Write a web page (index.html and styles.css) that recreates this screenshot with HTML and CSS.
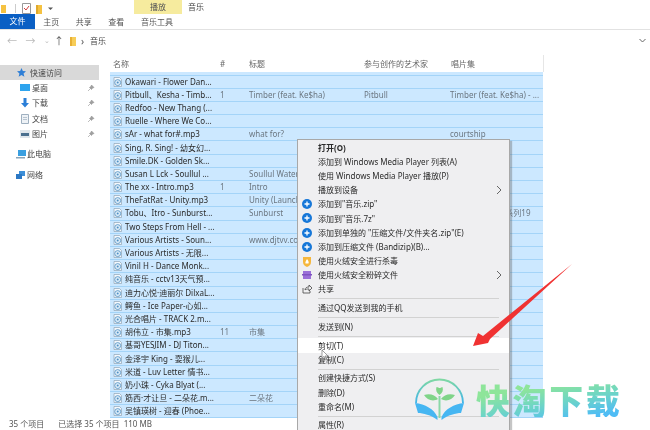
FILE: index.html
```html
<!DOCTYPE html>
<html lang="zh">
<head>
<meta charset="utf-8">
<title>音乐</title>
<link rel="stylesheet" href="styles.css">
</head>
<body>
<svg class="defs" width="0" height="0">
  <symbol id="mp3" viewBox="0 0 9 10">
    <path d="M1 .5h5.500L8.500 2.500V9.500H1z" fill="#f4f8fc" stroke="#8fa3b5" stroke-width=".7"/>
    <circle cx="4.700" cy="5.600" r="3" fill="#dcecf8" stroke="#4f90c4" stroke-width=".8"/>
    <circle cx="4.700" cy="5.600" r="1" fill="#4f90c4"/>
  </symbol>
  <symbol id="pin" viewBox="0 0 8 8">
    <path d="M4.500 1l2.500 2.500-1.500.5-1 1.500-2-2 1.500-1zM3 5L1 7" fill="#a0a0a0" stroke="#909090" stroke-width=".6"/>
  </symbol>
  <symbol id="plus" viewBox="0 0 10 10">
    <circle cx="5" cy="5" r="5" fill="#1677d8"/>
    <path d="M5 2.500v5M2.500 5h5" stroke="#fff" stroke-width="1.300"/>
  </symbol>
  <symbol id="chev" viewBox="0 0 6 10">
    <path d="M1 1l4 4-4 4" fill="none" stroke="#666" stroke-width="1"/>
  </symbol>
</svg>
<div class="window">
  <header class="title-row">
    <div class="quick">
      <svg class="q-folder-cut" width="6" height="9" viewBox="0 0 6 9"><path d="M0 1h5v8H0z" fill="#f5c242"/></svg>
      <span class="q-div"></span>
      <svg width="9" height="11" viewBox="0 0 9 11"><path d="M.5.500h8v10h-8z" fill="#fff" stroke="#999"/><path d="M2 5l2 2 3-4" fill="none" stroke="#d04040"/></svg>
      <svg width="7" height="10" viewBox="0 0 7 10"><path d="M0 1h6v9H0z" fill="#f5c242"/><path d="M0 1h2v9H0z" fill="#e0a92c"/></svg>
      <svg width="5" height="5" viewBox="0 0 5 5"><path d="M0 1.500h5L2.500 4z" fill="#555"/></svg>
    </div>
    <div class="play-tab">播放</div>
    <div class="win-title">音乐</div>
  </header>
  <nav class="tabs">
    <span class="tab file">文件</span>
    <span class="tab">主页</span>
    <span class="tab">共享</span>
    <span class="tab">查看</span>
    <span class="tab tool">音乐工具</span>
  </nav>
  <div class="address">
    <span class="nav-back">←</span>
    <span class="nav-fwd">→</span>
    <span class="nav-hist">⌄</span>
    <span class="up">↑</span>
    <svg class="crumb-folder" width="7" height="10" viewBox="0 0 7 10"><path d="M0 1h6v9H0z" fill="#f7cd58"/><path d="M0 1h2v9H0z" fill="#e8b035"/></svg>
    <span class="crumb-sep">›</span>
    <span class="crumb">音乐</span>
    <svg class="addr-drop" width="7" height="5" viewBox="0 0 7 5"><path d="M.5 1l3 3 3-3" fill="none" stroke="#666"/></svg>
  </div>
  <div class="body">
    <aside class="nav">
      <div class="nav-item active">
        <svg width="9" height="9" viewBox="0 0 10 10"><path d="M5 0l1.500 3.400 3.500.3-2.700 2.300.9 3.600L5 7.700 1.800 9.600l.9-3.600L0 3.700l3.500-.3z" fill="#2f7fd6"/></svg>
        <span>快速访问</span>
      </div>
      <div class="nav-item sub">
        <svg width="10" height="7" viewBox="0 0 10 7"><path d="M0 0h10v7H0z" fill="#2ea4ee"/></svg>
        <span class="nav-label">桌面</span>
        <svg class="pin" width="8" height="8"><use href="#pin"/></svg>
      </div>
      <div class="nav-item sub">
        <svg width="10" height="10" viewBox="0 0 10 10"><path d="M3.500 0h3v5H9L5 9.500 1 5h2.500z" fill="#2b7fd8"/></svg>
        <span class="nav-label">下载</span>
        <svg class="pin" width="8" height="8"><use href="#pin"/></svg>
      </div>
      <div class="nav-item sub">
        <svg width="10" height="10" viewBox="0 0 10 10"><path d="M1.500.500h7v9h-7z" fill="#eef2f6" stroke="#9fb0c0"/><path d="M3 3.500h4M3 5.500h4" stroke="#9fb0c0" stroke-width=".7"/></svg>
        <span class="nav-label">文档</span>
        <svg class="pin" width="8" height="8"><use href="#pin"/></svg>
      </div>
      <div class="nav-item sub">
        <svg width="10" height="8" viewBox="0 0 10 8"><path d="M0 0h10v8H0z" fill="#dfe6ec"/><path d="M1 3h8v3H1z" fill="#4a6f8f"/></svg>
        <span class="nav-label">图片</span>
        <svg class="pin" width="8" height="8"><use href="#pin"/></svg>
      </div>
      <div class="nav-item group pc">
        <svg width="10" height="10" viewBox="0 0 10 10"><path d="M2 1h8v6H2z" fill="#3a9fe0"/><path d="M0 8h9v1.500H0z" fill="#8aa4b8"/></svg>
        <span>此电脑</span>
      </div>
      <div class="nav-item group net">
        <svg width="10" height="10" viewBox="0 0 10 10"><path d="M3 1h6v5H3z" fill="#3d8fd8"/><path d="M0 4h6v5H0z" fill="#2c78c4"/></svg>
        <span>网络</span>
      </div>
    </aside>
    <main class="files">
      <div class="head">
        <span>名称</span><span>#</span><span>标题</span><span>参与创作的艺术家</span><span>唱片集</span>
      </div>
      <div class="list">
        <div class="rows">
          <div class="row"></div>
          <div class="row"><svg class="fi"><use href="#mp3"/></svg><span>Okawari - Flower Dan...</span></div>
          <div class="row"><svg class="fi"><use href="#mp3"/></svg><span>Pitbull、Kesha - Timb...</span><span class="c">1</span><span class="c">Timber (feat. Ke$ha)</span><span class="c">Pitbull</span><span class="c">Timber (feat. Ke$ha) - ...</span></div>
          <div class="row"><svg class="fi"><use href="#mp3"/></svg><span>Redfoo - New Thang (...</span></div>
          <div class="row"><svg class="fi"><use href="#mp3"/></svg><span>Ruelle - Where We Co...</span></div>
          <div class="row"><svg class="fi"><use href="#mp3"/></svg><span>sAr - what for#.mp3</span><span></span><span class="c">what for?</span><span></span><span class="c">courtship</span></div>
          <div class="row"><svg class="fi"><use href="#mp3"/></svg><span>Sing, R. Sing! - 幼女幻...</span></div>
          <div class="row"><svg class="fi"><use href="#mp3"/></svg><span>Smile.DK - Golden Sk...</span></div>
          <div class="row"><svg class="fi"><use href="#mp3"/></svg><span>Susan L Lck - Soullul ...</span><span></span><span class="c">Soullul Water</span></div>
          <div class="row"><svg class="fi"><use href="#mp3"/></svg><span>The xx - Intro.mp3</span><span class="c">1</span><span class="c">Intro</span></div>
          <div class="row"><svg class="fi"><use href="#mp3"/></svg><span>TheFatRat - Unity.mp3</span><span></span><span class="c">Unity (Launch)</span></div>
          <div class="row"><svg class="fi"><use href="#mp3"/></svg><span>Tobu、Itro - Sunburst...</span><span></span><span class="c">Sunburst</span><span></span><span class="c">NCS: Uncaged 系列19</span></div>
          <div class="row"><svg class="fi"><use href="#mp3"/></svg><span>Two Steps From Hell - ...</span></div>
          <div class="row"><svg class="fi"><use href="#mp3"/></svg><span>Various Artists - Soun...</span><span></span><span class="c">www.djtvv.com</span></div>
          <div class="row"><svg class="fi"><use href="#mp3"/></svg><span>Various Artists - 无限...</span></div>
          <div class="row"><svg class="fi"><use href="#mp3"/></svg><span>Vinil H - Dance Monk...</span></div>
          <div class="row"><svg class="fi"><use href="#mp3"/></svg><span>纯音乐 - cctv13天气预...</span></div>
          <div class="row"><svg class="fi"><use href="#mp3"/></svg><span>迪力心悦·迪丽尔 DilxaL...</span></div>
          <div class="row"><svg class="fi"><use href="#mp3"/></svg><span>鳄鱼 - Ice Paper-心如...</span></div>
          <div class="row"><svg class="fi"><use href="#mp3"/></svg><span>光合唱片 - TRACK 2.m...</span></div>
          <div class="row"><svg class="fi"><use href="#mp3"/></svg><span>胡伟立 - 市集.mp3</span><span class="c">11</span><span class="c">市集</span></div>
          <div class="row"><svg class="fi"><use href="#mp3"/></svg><span>基哥YESJIM - DJ Titon...</span></div>
          <div class="row"><svg class="fi"><use href="#mp3"/></svg><span>金泽宇 King - 耍猴儿...</span></div>
          <div class="row"><svg class="fi"><use href="#mp3"/></svg><span>米道 - Luv Letter 情书...</span></div>
          <div class="row"><svg class="fi"><use href="#mp3"/></svg><span>奶小珠 - Cyka Blyat (...</span></div>
          <div class="row"><svg class="fi"><use href="#mp3"/></svg><span>筋西·才让旦 - 二朵花.m...</span><span></span><span class="c">二朵花</span></div>
          <div class="row"><svg class="fi"><use href="#mp3"/></svg><span>吴镇瑛树 - 迎春 (Phoe...</span></div>
        </div>
      </div>
    </main>
  </div>
  <footer class="status"><span>35 个项目</span><span>已选择 35 个项目&nbsp; 110 MB</span></footer>

  <div class="menu">
    <div class="mi strong"><span>打开(O)</span></div>
    <div class="mi"><span>添加到 Windows Media Player 列表(A)</span></div>
    <div class="mi"><span>使用 Windows Media Player 播放(P)</span></div>
    <div class="mi"><span>播放到设备</span><svg class="ch" width="6" height="10"><use href="#chev"/></svg></div>
    <div class="mi"><svg class="mic" width="10" height="10"><use href="#plus"/></svg><span>添加到"音乐.zip"</span></div>
    <div class="mi"><svg class="mic" width="10" height="10"><use href="#plus"/></svg><span>添加到"音乐.7z"</span></div>
    <div class="mi"><svg class="mic" width="10" height="10"><use href="#plus"/></svg><span>添加到单独的 "压缩文件/文件夹名.zip"(E)</span></div>
    <div class="mi"><svg class="mic" width="10" height="10"><use href="#plus"/></svg><span>添加到压缩文件 (Bandizip)(B)...</span></div>
    <div class="mi"><svg class="mic" width="10" height="11" viewBox="0 0 10 11"><path d="M1 1h8v5c0 3-2 4-4 5-2-1-4-2-4-5z" fill="#f6b73c"/><path d="M5 3c1.500 2 2 3 1.500 4.500h-3C3 6 4 5 5 3z" fill="#fff"/></svg><span>使用火绒安全进行杀毒</span></div>
    <div class="mi"><svg class="mic" width="10" height="10" viewBox="0 0 10 10"><path d="M1 1h8v8H1z" fill="#9a6fd8"/><path d="M0 4h10v1.500H0z" fill="#7e52c0"/></svg><span>使用火绒安全粉碎文件</span><svg class="ch" width="6" height="10"><use href="#chev"/></svg></div>
    <div class="mi"><svg class="mic" width="10" height="10" viewBox="0 0 10 10"><path d="M1 4v5h7V7M3 6c0-2.500 2-3 4-3V1l3 3-3 3V5C5 5 4 5 3 6z" fill="none" stroke="#444" stroke-width=".8"/></svg><span>共享</span></div>
    <div class="sep"></div>
    <div class="mi"><span>通过QQ发送到我的手机</span></div>
    <div class="sep"></div>
    <div class="mi"><span>发送到(N)</span></div>
    <div class="sep"></div>
    <div class="mi hover"><span>剪切(T)</span></div>
    <div class="mi"><span>复制(C)</span></div>
    <div class="sep"></div>
    <div class="mi"><span>创建快捷方式(S)</span></div>
    <div class="mi"><span>删除(D)</span></div>
    <div class="mi"><span>重命名(M)</span></div>
    <div class="sep"></div>
    <div class="mi"><span>属性(R)</span></div>
  </div>

  <svg class="cursor" width="8" height="12" viewBox="0 0 8 12"><path d="M1 1v8l2-1.500L4.500 11l1-.5L4 7h3z" fill="#fff" stroke="#777" stroke-width=".7"/></svg>
  <svg class="red-arrow" width="104" height="86" viewBox="0 0 104 86"><path d="M101 2L19 77l-2 4-15 3 5-13 5 3z" fill="#f03232"/></svg>

  <div class="mark">
    <svg width="49" height="43" viewBox="0 0 49 43">
      <defs><linearGradient id="ring" x1="0" y1="0" x2="0" y2="1"><stop offset="0" stop-color="#7fd8a4"/><stop offset="1" stop-color="#3fb4ea"/></linearGradient></defs>
      <path d="M1 25a23.500 23.500 0 1 1 47 0" fill="none" stroke="url(#ring)" stroke-width="1.800"/>
      <path d="M23 21c-3-4-8-6-14-4 3 5 9 7 14 4zM26 21c3-4 8-6 14-4-3 5-9 7-14 4zM24.500 17c-3-2-4-5-3-8 3 1 3 1 3 1s1 0 3-1c1 3 0 6-3 8z" fill="#7fd488"/>
      <path d="M24.500 18v22" stroke="#8ad8a8" stroke-width="2"/>
      <path d="M0 25c10 1 19 6 22.500 14v3C16 37 8 35 3 35zM49 25c-10 1-19 6-22.500 14v3c6.500-5 14.500-7 19.500-7z" fill="#46b6f2"/>
    </svg>
    <span class="mark-text">快淘下载</span>
  </div>
</div>
</body>
</html>
```
FILE: styles.css
```css
* { box-sizing: border-box; }
html, body { margin: 0; padding: 0; background: #fff; }
.defs { position: absolute; }
.window {
  position: relative;
  width: 650px;
  height: 430px;
  overflow: hidden;
  display: flex;
  flex-direction: column;
  background: #fff;
  color: #333;
  font: 8px/1 "Noto Sans", "Noto Sans CJK SC", sans-serif;
  filter: blur(0.3px);
}
.title-row { height: 14px; display: flex; flex: none; }
.quick { width: 134px; display: flex; align-items: center; gap: 5px; padding-top: 3px; }
.q-div { width: 1px; height: 9px; background: #ccc; margin: 0 1px 0 3px; }
.q-folder-cut { margin-left: 1px; }
.play-tab { width: 48px; background: #f6eb9e; display: flex; align-items: center; justify-content: center; color: #555; }
.win-title { margin-left: 6px; display: flex; align-items: center; color: #444; }
.tabs { height: 16px; display: flex; flex: none; border-bottom: 1px solid #e2e2e2; color: #555; align-items: center; }
.tab { width: 32.500px; text-align: center; }
.tabs .file { width: 35px; height: 15px; line-height: 14px; background: #0a5fc4; color: #fff; }
.tabs .tool { width: 49px; }
.address { height: 25px; flex: none; display: flex; align-items: center; padding: 0 0 4px 7px; color: #bbb; font-size: 10px; }
.nav-back { width: 9px; text-align: center; }
.nav-fwd { width: 9px; text-align: center; margin-left: 9.500px; }
.nav-hist { width: 3px; text-align: center; font-size: 7px; margin-left: 9px; }
.up { color: #555; width: 8px; margin-left: 7.500px; }
.crumb-folder { margin-left: 8px; }
.crumb-sep { color: #555; margin-left: 4px; width: 3px; }
.crumb { color: #444; margin-left: 6px; font-size: 8px; }
.addr-drop { margin-left: auto; margin-right: 4px; }
.body { flex: 1; display: flex; min-height: 0; }
.nav { width: 110px; flex: none; padding-top: 10px; color: #444; }
.nav-item { height: 15.300px; display: flex; align-items: center; gap: 4px; width: 99px; padding-left: 17px; }
.nav-item.active { background: #d9d9d9; }
.nav-item.sub { padding-left: 20px; gap: 2px; }
.nav-label { flex: 1; }
.pin { margin-right: 4px; }
.nav-item.group { padding-left: 16px; gap: 1px; }
.nav-item.pc { margin-top: 5px; }
.nav-item.net { margin-top: 5.700px; }
.files { width: 433px; flex: none; display: flex; flex-direction: column; min-height: 0; position: relative; }
.head {
  height: 17px;
  flex: none;
  display: grid;
  grid-template-columns: 107px 29px 115px 87px 92px;
  padding-left: 3px;
  align-items: center;
  color: #666;
  border-right: 1px solid #e6e6e6;
  margin-right: -1px;
}
.list { flex: 1; overflow: hidden; background: #cce8ff; min-height: 0; }
.rows { margin-top: -9.700px; }
.row {
  height: 13.200px;
  display: grid;
  grid-template-columns: 15px 95px 29px 115px 86px 93px;
  align-items: center;
  border-bottom: 1px solid #a4d4f8;
  color: #2a2a2a;
  white-space: nowrap;
}
.row > .c { color: #6b7680; }
.fi { width: 9px; height: 10px; margin-left: 3px; }
.status { height: 12px; flex: none; display: flex; gap: 14px; padding-left: 9px; color: #555; align-items: center; background: #fff; }
.menu {
  position: absolute;
  left: 297px;
  top: 139px;
  width: 213px;
  height: 300px;
  background: #efeff1;
  border: 1px solid #a8a8a8;
  padding: 0.500px 0 0 0;
  color: #2a2a2a;
  box-shadow: 2px 2px 1px rgba(90,90,90,.35);
}
.mi { height: 14.200px; display: flex; align-items: center; position: relative; padding-left: 20px; white-space: nowrap; }
.mi.strong { font-weight: 700; }
.mi.hover { background: #fff; }
.mic { position: absolute; left: 4px; top: 2px; }
.ch { position: absolute; right: 7px; top: 2px; }
.sep { height: 1px; margin: 1.750px 10px 1.750px 20px; background: #d2d2d2; }
.cursor { position: absolute; left: 321px; top: 349px; }
.red-arrow { position: absolute; left: 471px; top: 262px; }
.mark { position: absolute; left: 415px; top: 378px; display: flex; align-items: center; gap: 12px; }
.mark-text {
  font: 900 34px/1 "Noto Sans CJK SC", sans-serif;
  letter-spacing: 2.600px;
  background: linear-gradient(170deg, #8ee59a 25%, #6fd6c4 55%, #4fbcf5 90%);
  -webkit-background-clip: text;
  background-clip: text;
  color: transparent;
}
```
